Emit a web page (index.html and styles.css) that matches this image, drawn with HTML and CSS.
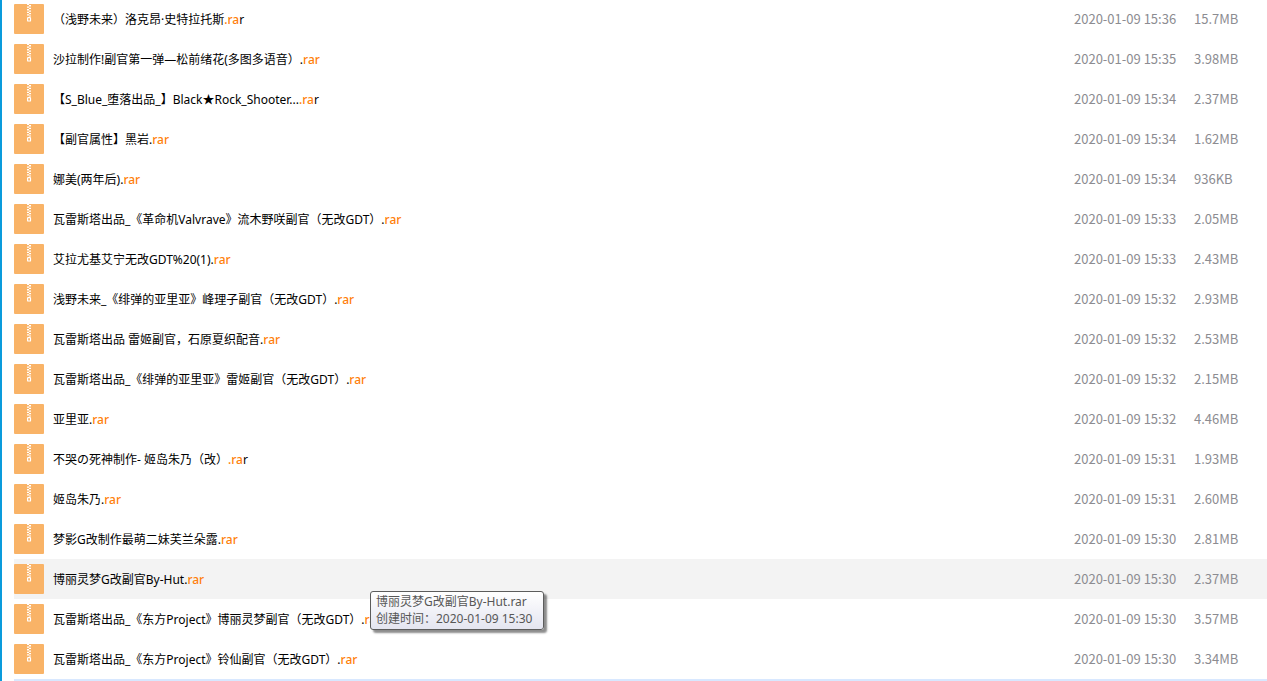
FILE: index.html
```html
<!DOCTYPE html>
<html lang="zh-CN">
<head>
<meta charset="utf-8">
<title>文件列表</title>
<link rel="stylesheet" href="styles.css">
</head>
<body>
<svg class="defs" aria-hidden="true">
  <symbol id="zip" viewBox="0 0 30 30">
    <rect width="30" height="30" rx="1" fill="#f9b367"/>
    <path fill="#fff" d="M13 0h2v1h-2zM15 1h2v1.500h-2zM13 2.500h2v1.300h-2zM15 3.800h2v1.300h-2zM13 5.100h2v1.300h-2zM15 6.400h2v1.300h-2zM13 7.700h2v1.300h-2zM15 9h2v1.300h-2zM13 10.300h2v1.300h-2zM15 11.600h2v1h-2z"/>
    <rect x="13.600" y="13.600" width="2.900" height="3.400" rx=".6" fill="none" stroke="#fff" stroke-width="1.200"/>
  </symbol>
</svg>
<main class="panel">
<table class="files">
<tbody>
<tr><td class="name"><div class="file"><svg class="icon"><use href="#zip"/></svg><a href="#">（浅野未来）洛克昂·史特拉托斯<mark>.ra</mark>r</a></div></td><td class="date">2020-01-09 15:36</td><td class="size">15.7MB</td></tr>
<tr><td class="name"><div class="file"><svg class="icon"><use href="#zip"/></svg><a href="#">沙拉制作!副官第一弹—松前绪花(多图多语音）.<mark>rar</mark></a></div></td><td class="date">2020-01-09 15:35</td><td class="size">3.98MB</td></tr>
<tr><td class="name"><div class="file"><svg class="icon"><use href="#zip"/></svg><a href="#">【S_Blue_堕落出品_】Black★Rock_Shooter...<mark>.ra</mark>r</a></div></td><td class="date">2020-01-09 15:34</td><td class="size">2.37MB</td></tr>
<tr><td class="name"><div class="file"><svg class="icon"><use href="#zip"/></svg><a href="#">【副官属性】黑岩.<mark>rar</mark></a></div></td><td class="date">2020-01-09 15:34</td><td class="size">1.62MB</td></tr>
<tr><td class="name"><div class="file"><svg class="icon"><use href="#zip"/></svg><a href="#">娜美(两年后).<mark>rar</mark></a></div></td><td class="date">2020-01-09 15:34</td><td class="size">936KB</td></tr>
<tr><td class="name"><div class="file"><svg class="icon"><use href="#zip"/></svg><a href="#">瓦雷斯塔出品_《革命机Valvrave》流木野咲副官（无改GDT）.<mark>rar</mark></a></div></td><td class="date">2020-01-09 15:33</td><td class="size">2.05MB</td></tr>
<tr><td class="name"><div class="file"><svg class="icon"><use href="#zip"/></svg><a href="#">艾拉尤基艾宁无改GDT%20(1).<mark>rar</mark></a></div></td><td class="date">2020-01-09 15:33</td><td class="size">2.43MB</td></tr>
<tr><td class="name"><div class="file"><svg class="icon"><use href="#zip"/></svg><a href="#">浅野未来_《绯弹的亚里亚》峰理子副官（无改GDT）.<mark>rar</mark></a></div></td><td class="date">2020-01-09 15:32</td><td class="size">2.93MB</td></tr>
<tr><td class="name"><div class="file"><svg class="icon"><use href="#zip"/></svg><a href="#">瓦雷斯塔出品 雷姬副官，石原夏织配音.<mark>rar</mark></a></div></td><td class="date">2020-01-09 15:32</td><td class="size">2.53MB</td></tr>
<tr><td class="name"><div class="file"><svg class="icon"><use href="#zip"/></svg><a href="#">瓦雷斯塔出品_《绯弹的亚里亚》雷姬副官（无改GDT）.<mark>rar</mark></a></div></td><td class="date">2020-01-09 15:32</td><td class="size">2.15MB</td></tr>
<tr><td class="name"><div class="file"><svg class="icon"><use href="#zip"/></svg><a href="#">亚里亚.<mark>rar</mark></a></div></td><td class="date">2020-01-09 15:32</td><td class="size">4.46MB</td></tr>
<tr><td class="name"><div class="file"><svg class="icon"><use href="#zip"/></svg><a href="#">不哭の死神制作- 姬岛朱乃（改）<mark>.ra</mark>r</a></div></td><td class="date">2020-01-09 15:31</td><td class="size">1.93MB</td></tr>
<tr><td class="name"><div class="file"><svg class="icon"><use href="#zip"/></svg><a href="#">姬岛朱乃.<mark>rar</mark></a></div></td><td class="date">2020-01-09 15:31</td><td class="size">2.60MB</td></tr>
<tr><td class="name"><div class="file"><svg class="icon"><use href="#zip"/></svg><a href="#">梦影G改制作最萌二妹芙兰朵露.<mark>rar</mark></a></div></td><td class="date">2020-01-09 15:30</td><td class="size">2.81MB</td></tr>
<tr class="hover"><td class="name"><div class="file"><svg class="icon"><use href="#zip"/></svg><a href="#" aria-describedby="tip">博丽灵梦G改副官By-Hut.<mark>rar</mark></a><div class="tip" id="tip" role="tooltip">博丽灵梦G改副官By-Hut.rar<br>创建时间：2020-01-09 15:30</div></div></td><td class="date">2020-01-09 15:30</td><td class="size">2.37MB</td></tr>
<tr><td class="name"><div class="file"><svg class="icon"><use href="#zip"/></svg><a href="#">瓦雷斯塔出品_《东方Project》博丽灵梦副官（无改GDT）.<mark>rar</mark></a></div></td><td class="date">2020-01-09 15:30</td><td class="size">3.57MB</td></tr>
<tr><td class="name"><div class="file"><svg class="icon"><use href="#zip"/></svg><a href="#">瓦雷斯塔出品_《东方Project》铃仙副官（无改GDT）.<mark>rar</mark></a></div></td><td class="date">2020-01-09 15:30</td><td class="size">3.34MB</td></tr>
<tr class="selected"><td colspan="3"></td></tr>
</tbody>
</table>
</main>
</body>
</html>
```
FILE: styles.css
```css
* {
  box-sizing: border-box;
}

body {
  margin: 0;
  background: #fff;
  color: #000;
  font: 12px/18px "Noto Sans", "Noto Sans CJK SC", sans-serif;
}

.defs {
  position: absolute;
  width: 0;
  height: 0;
}

.panel {
  height: 100vh;
  overflow: hidden;
  border-left: 2px solid #0a9bdc;
  padding-left: 12px;
}

.files {
  width: 100%;
  margin-top: -1px;
  border-collapse: collapse;
  table-layout: fixed;
}

.files tr {
  height: 40px;
}

.files td {
  padding: 0;
  white-space: nowrap;
}

.files .date,
.files .size {
  color: #8c8c91;
  font: 13px/18px "Noto Sans CJK SC", sans-serif;
}

.files .date {
  width: 120px;
}

.files .size {
  width: 73px;
}

.file {
  position: relative;
  display: flex;
  align-items: center;
  gap: 9px;
}

.icon {
  width: 30px;
  height: 30px;
  flex: none;
}

.file a {
  padding-top: 2px;
  color: inherit;
  text-decoration: none;
}

.file mark {
  background: none;
  color: #ff7f0a;
  font-weight: 500;
}

.hover {
  background: #f3f3f3;
}

.selected {
  background: #d8e8ff;
}

.tip {
  position: absolute;
  z-index: 1;
  top: 27px;
  left: 356px;
  min-width: 174px;
  padding: 1px 5px 2px;
  border: 1px solid #5c5c5c;
  border-radius: 3px;
  background: linear-gradient(#fff, #e4e5f0);
  box-shadow: 3px 3px 2px rgba(0, 0, 0, 0.45);
  color: #575757;
  line-height: 17px;
}
```
